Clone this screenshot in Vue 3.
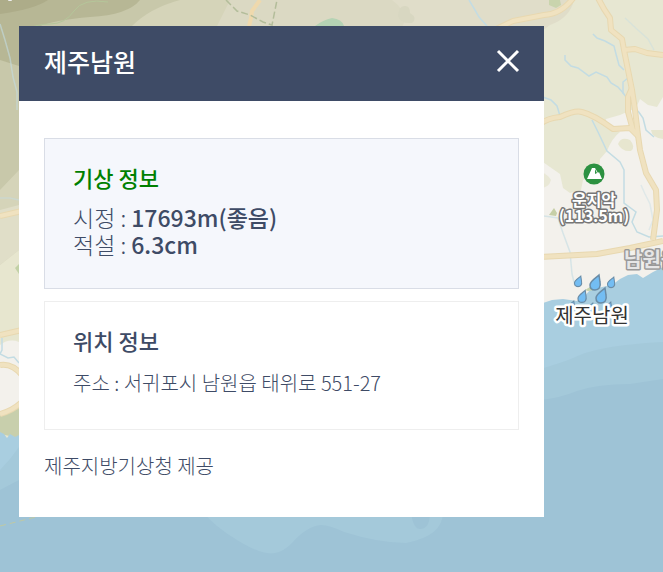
<template>
  <main class="map-view">
    <svg class="map" viewBox="0 0 663 572" preserveAspectRatio="xMinYMin slice" role="img" aria-label="지도">
      <rect width="663" height="572" fill="#e7e7d2" />
      <!-- terrain -->
      <path d="M0 0H544L574 0Q570 18 550 25L530 40H0Z" fill="#e0ddc9" />
      <path d="M0 0H392Q412 15 400 30H0Z" fill="#dbd9c3" />
      <path d="M0 0H230L215 30H20V300H0Z" fill="#d5d4b9" />
      <path d="M0 0H180Q150 8 132 26L19 60V170L0 190Z" fill="#c8c8aa" />
      <path d="M0 0H140Q128 15 90 17Q55 20 40 26H19V66L0 60Z" fill="#b7b795" />
      <path d="M0 0H48Q35 9 0 14Z" fill="#adac89" />
      <path d="M0 210L19 205V250L0 265Z" fill="#e0dec8" />
      <path d="M0 265L19 250V340H0Z" fill="#e7e6cf" />
      <path d="M19 264L15 268L19 274Z" fill="#c2d1a6" />
      <path d="M315 26Q323 20 332 18Q342 19 344 26Z" fill="#b5d3b4" />
      <path d="M398 16Q399 6 404 6Q410 5 410 13Q418 18 412 23Q400 24 398 16Z" fill="#d8d7c1" />
      <path d="M549 0H560L561 5L556 8L549 5Z" fill="#c9d4ad" />
      <path d="M23 31Q35 24 50 24T74 11T108 2" class="ridge" />
      <rect x="8" y="-2" width="4" height="3" rx="1" fill="#eee" />

      <!-- lowland -->
      <path d="M663 97L657 107L648 105L640 99L636 108L620 115L606 119L607 128L620 132Q612 138 607 151L600 159L599 175L583 180L581 190L570 193L563 188L560 174L540 160V310H663Z" fill="#f3f1ec" />
      <path d="M540 172Q548 174 551 180Q549 188 540 188Z" fill="#e9e8d6" />
      <path d="M618 144Q621 136 630 140Q636 147 631 151Q622 152 618 144Z" fill="#e7e6cf" />
      <path d="M651 130Q652 138 663 139V130Z" fill="#e7e6cf" />
      <path d="M549 215L554 208L557 213L556 216Z" fill="#c6cfa7" />
      <path d="M0 345Q9 338 19 342V405Q12 412 0 411Z" fill="#f3f1ec" />
      <path d="M0 414L19 405V438L0 434Z" fill="#c8cfac" />

      <!-- streams -->
      <g class="stream">
        <path d="M593 34L597 38L605 41L614 46L616 54L619 65L624 70" />
        <path d="M565 55V60L571 66L578 68L589 76L596 72L607 77L611 83L618 87L624 94" />
        <path d="M628 78L623 82V93L627 98" />
        <path d="M625 18L639 31L648 39L654 50" opacity="0.4" />
        <path d="M540 96L551 100L557 106L560 116" />
        <path d="M638 111L643 118L646 130L654 137" />
        <path d="M592 120L598 132L607 151L620 162L624 170V203L636 212L632 222L637 232L649 237L663 236" />
        <path d="M641 185L645 194L650 204L653 220L649 230" opacity="0.4" />
        <path d="M544 216L558 218L563 233L570 252L572 274L575 286" opacity="0.6" />
        <path d="M469 0L475 10L479 17L487 26" />
        <path d="M0 24L5 40L10 58L13 77L17 92V110" opacity="0.6" />
        <path d="M0 198H10L19 200" opacity="0.5" />
        <path d="M2 338V350L0 354L8 358L14 357L19 363" />
      </g>

      <!-- roads -->
      <g v-for="layer in ['casing', 'road']" :key="layer" :class="layer">
        <path v-for="d in roads" :key="d" :d="d" />
      </g>
      <path d="M260 0L252 11L251 18L249 26" class="trail" />
      <path d="M226 0L237 11L250 15L263 22L272 25L277 0" class="border-line" />

      <!-- sea -->
      <path d="M0 432L4 434L7 438L10 434L15 437L19 435L120 400L540 304L552 300L563 299L577 301L583 298L590 290L602 287L612 285L620 279L628 275L637 274L643 278L648 275L653 272L663 267V572H0Z" fill="#a9cee0" />
      <path d="M0 470Q10 460 19 447L540 369Q565 362 580 355Q604 345 663 342V572H0Z" fill="#a4c9da" />
      <path d="M0 490L19 480L540 400Q560 398 577 391Q598 384 630 384L663 379V572H0Z" fill="#9ec3d6" />
      <path d="M203 512Q214 526 237 540Q263 556 275 553Q283 552 292 543Q307 526 321 525Q329 525 344 532Q379 543 406 543Q443 536 443 512Z" fill="#a4c9da" />
      <path d="M411 512Q413 529 420 529Q430 529 430 512Z" fill="#9ec3d6" />
      <path d="M0 526L40 516" class="sea-line" />
      <path d="M585 290L590 287L597 288L594 290L588 291Z" fill="#c5d2a9" />

      <!-- mountain marker -->
      <circle cx="594" cy="174" r="10.5" fill="#2c9140" />
      <path d="M587 179L592 168L595 168L598 173L599 172L602 179Z" fill="#fff" />
      <path d="M595 169L597 173L595 174Z" fill="#2c9140" />
      <g class="place">
        <text x="594" y="206">운지악</text>
        <text x="594" y="222">(113.5m)</text>
      </g>
      <text x="624" y="267" class="town">남원읍</text>

      <!-- rain marker -->
      <g class="drops">
        <path v-for="drop in drops" :key="drop.x" :transform="`translate(${drop.x} ${drop.y}) scale(${drop.size})`" d="M4 -7C1 -4 -5 -1 -5 3C-5 7 -2 8 0 8C4 8 6 5 5 0Z" />
      </g>
      <text x="592" y="323" class="station">제주남원</text>
    </svg>

    <section class="popup" aria-labelledby="popup-title">
      <header class="popup-header">
        <h1 id="popup-title">{{ station.name }}</h1>
        <button type="button" class="close" aria-label="닫기">
          <svg viewBox="0 0 24 24" width="24" height="24" aria-hidden="true">
            <path d="M2 2L22 22M22 2L2 22" />
          </svg>
        </button>
      </header>
      <div class="popup-body">
        <section class="card weather">
          <h2>기상 정보</h2>
          <p v-for="item in station.weather" :key="item.label">
            {{ item.label }} : <strong>{{ item.value }}</strong>
          </p>
        </section>
        <section class="card location">
          <h2>위치 정보</h2>
          <p>주소 : {{ station.address }}</p>
        </section>
        <p class="provider">제주지방기상청 제공</p>
      </div>
    </section>
  </main>
</template>

<script setup>
const station = {
  name: '제주남원',
  weather: [
    { label: '시정', value: '17693m(좋음)' },
    { label: '적설', value: '6.3cm' }
  ],
  address: '서귀포시 남원읍 태위로 551-27'
};

const roads = [
  'M598 -2L604 9L610 18L611 30L622 39L624 50L628 70L632 90L635 110L638 135L640 150L646 173L656 190L657 210L653 240',
  'M632 88L628 97V112L633 130L638 135',
  'M624 50L635 49L647 53L663 55',
  'M490 32L513 21L544 15Q562 14 574 -3',
  'M540 124Q548 118 560 117Q575 110 582 112Q594 115 613 129L630 128L638 136',
  'M540 257L597 254L630 248L663 241',
  'M0 216L22 211',
  'M0 335L22 330',
  'M0 365Q12 363 22 375',
  'M0 414Q12 411 22 402'
];

const drops = [
  { x: 578, y: 281, size: 0.7 },
  { x: 595, y: 282, size: 1 },
  { x: 611, y: 282, size: 0.7 },
  { x: 582, y: 296, size: 0.8 },
  { x: 601, y: 295, size: 1 },
  { x: 571, y: 306, size: 0.7 },
  { x: 590, y: 308, size: 0.7 },
  { x: 608, y: 307, size: 0.7 }
];
</script>

<style>
body {
  margin: 0;
}
</style>

<style scoped>
.map-view {
  position: relative;
  min-height: 100vh;
  display: flow-root;
  overflow: hidden;
  background: #9ec3d6;
  color: #3e4b66;
  font-family: "Noto Sans CJK KR", sans-serif;
}

.map {
  position: absolute;
  inset: 0;
  width: 100%;
  height: 100%;
}

.ridge {
  fill: none;
  stroke: #b5c69a;
  stroke-width: 1;
}

.stream {
  fill: none;
  stroke: #c3dce3;
  stroke-width: 1.5;
}

.casing {
  fill: none;
  stroke: #e8d8b0;
  stroke-width: 6;
  stroke-linejoin: round;
}

.road {
  fill: none;
  stroke: #f0e2c0;
  stroke-width: 4;
  stroke-linejoin: round;
}

.trail {
  fill: none;
  stroke: #efd9ad;
  stroke-width: 4;
}

.border-line {
  fill: none;
  stroke: #b3bd9a;
  stroke-width: 1.5;
  stroke-dasharray: 7 3;
}

.sea-line {
  fill: none;
  stroke: #bfc9a4;
  stroke-width: 1;
  stroke-dasharray: 6 4;
}

.place,
.town {
  fill: #fff;
  stroke: #777;
  stroke-width: 3;
  stroke-linejoin: round;
  paint-order: stroke;
  font-size: 16px;
  font-weight: 700;
}

.place {
  text-anchor: middle;
}

.town {
  fill: #e6e6e6;
  stroke: #999;
  font-size: 20px;
}

.drops {
  fill: #73bdf3;
  stroke: #6a8ca6;
  stroke-width: 1.5;
}

.station {
  fill: #333;
  stroke: #fff;
  stroke-width: 5;
  stroke-linejoin: round;
  paint-order: stroke;
  text-anchor: middle;
  font-size: 20px;
}

.popup {
  position: relative;
  margin: 26px 119px 55px 19px;
  background: #fff;
}

.popup-header {
  display: flex;
  align-items: center;
  justify-content: space-between;
  padding: 17px 24px 22px 25px;
  background: #3e4b66;
  color: #fff;
}

h1,
h2,
p {
  margin: 0;
}

h1 {
  font-size: 25px;
  font-weight: 500;
  line-height: 36px;
}

.close {
  display: flex;
  padding: 0;
  border: 0;
  background: none;
  color: inherit;
  cursor: pointer;
}

.close path {
  fill: none;
  stroke: currentColor;
  stroke-width: 3;
}

.popup-body {
  padding: 37px 25px;
}

.card {
  padding: 22px 28px 30px;
  border: 1px solid #eee;
}

.card + .card {
  margin-top: 12px;
}

.weather {
  border-color: #d9dde6;
  background: #f5f7fc;
}

h2 {
  margin-bottom: 11px;
  font-size: 22px;
  font-weight: 500;
  line-height: 32px;
}

.weather h2 {
  color: #008000;
}

.card p {
  font-size: 23px;
  font-weight: 300;
  line-height: 27px;
}

.card strong {
  font-weight: 500;
}

.card.location p,
.provider {
  font-size: 20px;
  font-weight: 300;
  line-height: 32px;
}

.provider {
  margin-top: 20px;
}

.popup-body {
  padding-bottom: 35px;
}
</style>
